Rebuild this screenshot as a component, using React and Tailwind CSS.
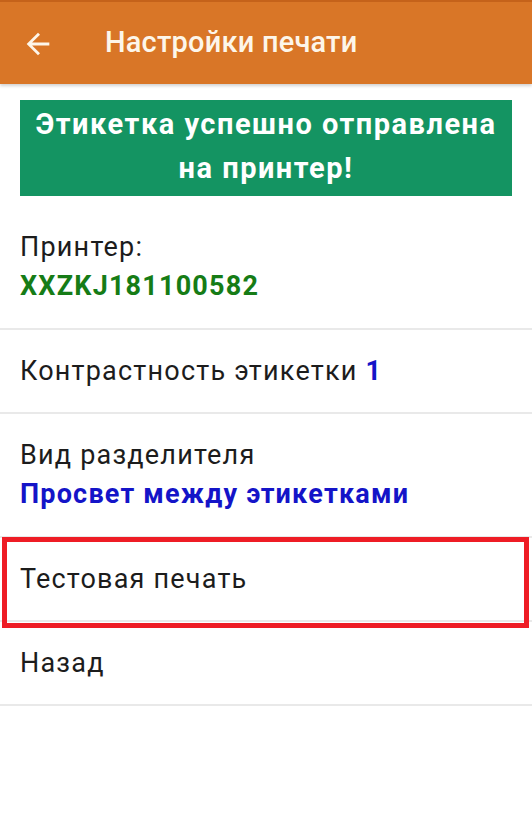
import { useState } from 'react';

function BackArrow() {
  return (
    <svg viewBox="0 0 24 24" className="w-[34px] h-[34px] fill-[#fdf6ea]">
      <path d="M20 11H7.83l5.59-5.59L12 4l-8 8 8 8 1.41-1.41L7.83 13H20v-2z" />
    </svg>
  );
}

function Row({ children, tall = false }) {
  return (
    <div
      className={`flex flex-col justify-center px-5 border-b-2 border-[#e9e9e9] ${
        tall ? 'h-[124px]' : 'h-[84px]'
      }`}
    >
      {children}
    </div>
  );
}

export default function App() {
  const [contrast] = useState(1);

  return (
    <div className="w-[532px] h-[827px] bg-white font-['Roboto',sans-serif] text-[#1c1c1c] overflow-hidden">
      {/* Toolbar */}
      <div className="h-[84px] bg-[#d97627] border-t-2 border-[#c5621a] flex items-center shadow-[0_2px_3px_rgba(0,0,0,0.18)]">
        <div className="ml-[21px] mt-[2px] flex items-center">
          <BackArrow />
        </div>
        <h1 className="ml-[50px] text-[29px] font-medium text-[#fdf6ea] tracking-[0.2px]">Настройки печати</h1>
      </div>

      {/* Status banner */}
      <div className="mx-5 mt-4 pt-[2px] pb-[6px] bg-[#149462] flex flex-col items-center">
        <p className="text-[29px] font-bold text-white leading-[44px] tracking-[1.5px]">Этикетка успешно отправлена</p>
        <p className="text-[29px] font-bold text-white leading-[44px] tracking-[1.5px]">на принтер!</p>
      </div>

      <div className="mt-[10px] text-[27px] leading-[39px] tracking-[1.2px]">
        <Row tall>
          <p>Принтер:</p>
          <p className="font-bold text-[#167c16]">XXZKJ181100582</p>
        </Row>
        <Row>
          <p>
            Контрастность этикетки <span className="font-bold text-[#1414c8]">{contrast}</span>
          </p>
        </Row>
        <Row tall>
          <p>Вид разделителя</p>
          <p className="font-bold text-[#1414c8]">Просвет между этикетками</p>
        </Row>
        <div className="relative">
          <Row>
            <p>Тестовая печать</p>
          </Row>
          <div className="absolute top-[-1px] left-[2px] right-[3px] bottom-[-6px] border-[5px] border-[#ee1c25]" />
        </div>
        <Row>
          <p>Назад</p>
        </Row>
      </div>
    </div>
  );
}
